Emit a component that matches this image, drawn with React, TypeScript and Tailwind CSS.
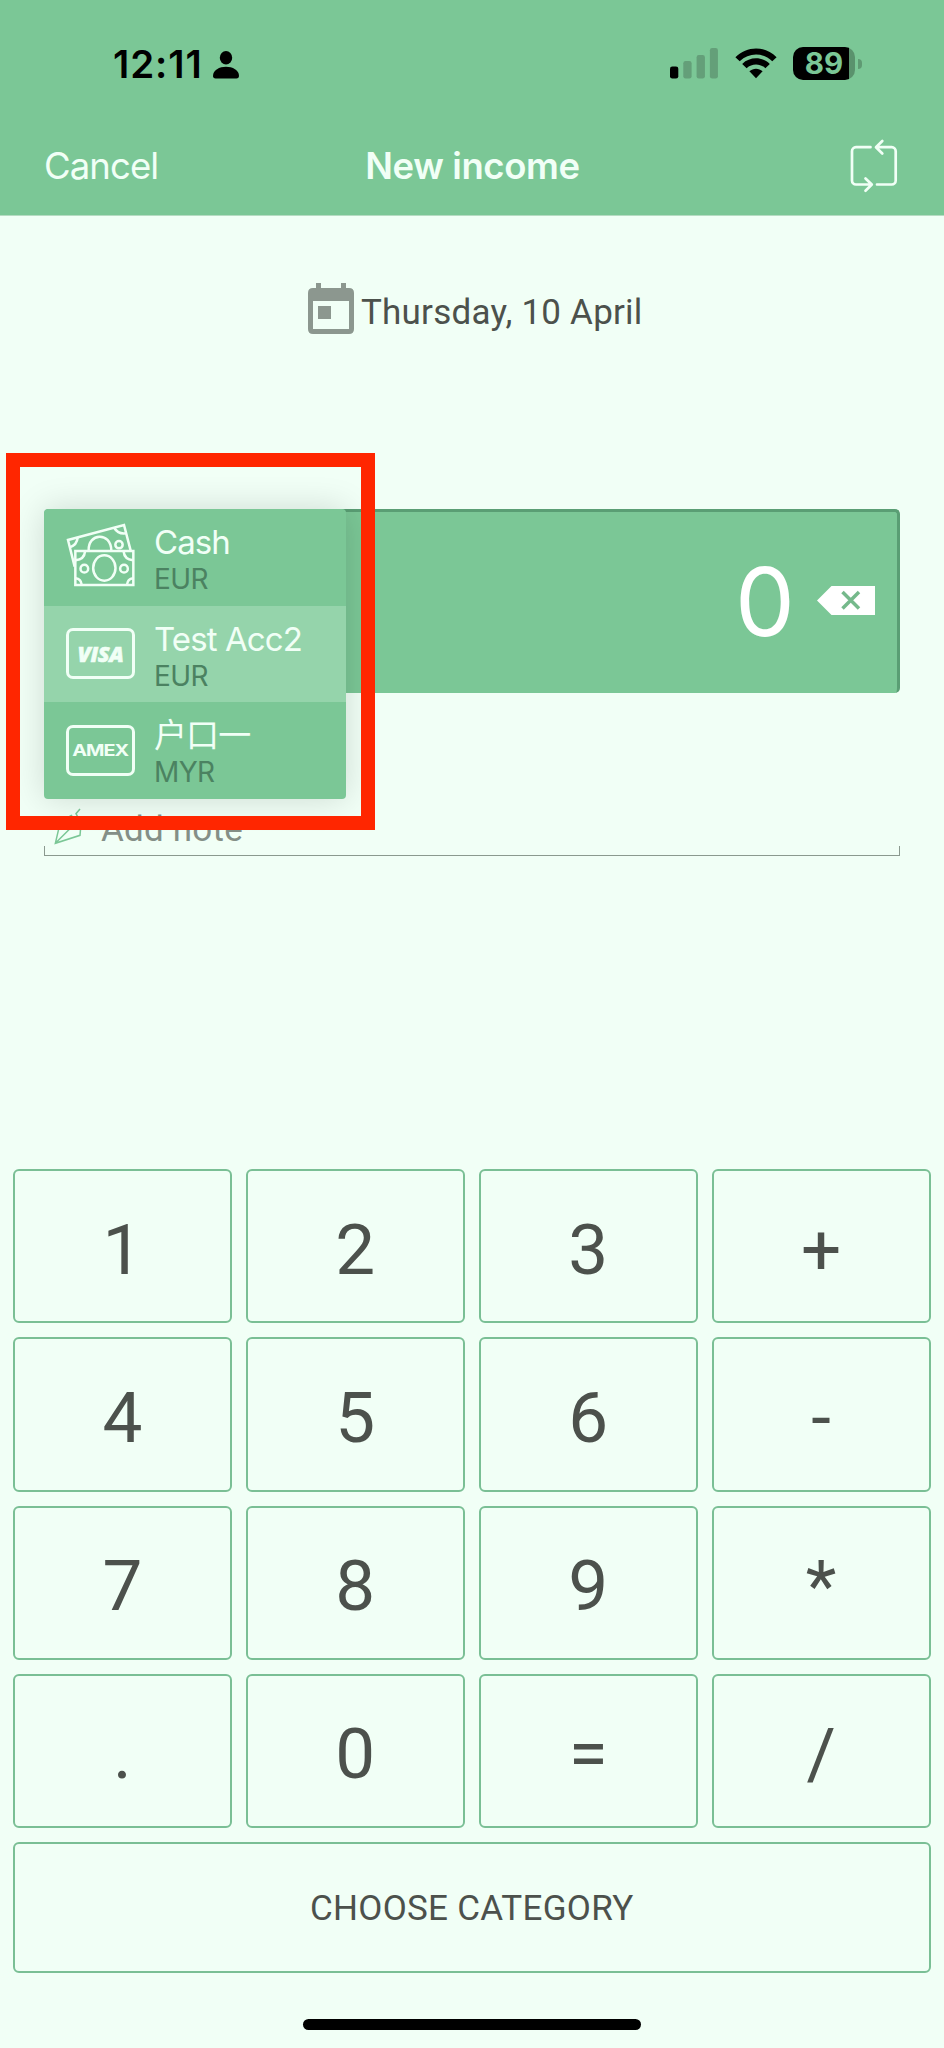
import React from "react";

const keys = ["1", "2", "3", "+", "4", "5", "6", "-", "7", "8", "9", "*", ".", "0", "=", "/"];

function StatusBar() {
  return (
    <div className="flex h-[126px] items-start pt-[41px] pl-[113px] text-black">
      <span className="w-[100px] text-[38.5px] leading-[47px] font-semibold tracking-[0.9px] whitespace-nowrap">12:11</span>
      <svg width="26" height="28" viewBox="0 0 26 28" className="mt-[10px]">
        <ellipse cx="13" cy="6.8" rx="6.2" ry="6.8" />
        <path d="M2.6 27.5Q0 27.5 0 24.8C0 19 6.5 15.7 13 15.7S26 19 26 24.8Q26 27.5 23.4 27.5Z" />
      </svg>
      <svg width="48" height="31" viewBox="0 0 48 31" className="mt-[7px] ml-[431px]">
        <rect x="0" y="18.5" width="8.3" height="12" rx="2.3" />
        <g fill="#649f79">
          <rect x="13.3" y="13" width="8.3" height="17.5" rx="2.3" />
          <rect x="26.6" y="7" width="8.3" height="23.5" rx="2.3" />
          <rect x="39.9" y="0" width="8" height="30.5" rx="2.3" />
        </g>
      </svg>
      <svg width="42" height="31" viewBox="0 0 42 31" className="mt-[7px] ml-[17px]">
        <path d="M.4 9.3C12-2.6 30-2.6 41.6 9.3L37.3 13.3C28 4.2 14 4.2 4.7 13.3Z" />
        <path d="M7.2 15.9C15 8.5 27 8.5 34.8 15.9L30.4 20.2C25 15.2 17 15.2 11.6 20.2Z" />
        <path d="M14.4 23.2C18.3 19.8 23.7 19.8 27.6 23.2L21 30.3Z" />
      </svg>
      <div className="mt-[6px] ml-[16px] flex h-[33px] w-[62px] justify-center rounded-[10px] bg-[linear-gradient(90deg,#000_56px,#5a926d_56px)]">
        <span className="text-[29.5px] leading-[33px] font-bold text-[#7bc796]">89</span>
      </div>
      <div className="mt-[18px] ml-[3px] h-[10px] w-[3.5px] rounded-r-full bg-[#5f9a73]" />
    </div>
  );
}

function RepeatIcon() {
  return (
    <svg width="50" height="54" viewBox="849 138.5 50 54" fill="none" stroke="#f1fff6" strokeWidth="2.7" strokeLinecap="round" strokeLinejoin="round">
      <path d="M870.5 146.7H856a4 4 0 0 0-4 4V180a4 4 0 0 0 4 4h15.5M865.5 178l6.3 6-6.3 6.3" />
      <path d="M877 184h14.7a4 4 0 0 0 4-4v-29.3a4 4 0 0 0-4-4h-15M882.3 140.5l-6.3 6.2 6.3 6.3" />
    </svg>
  );
}

function CalendarIcon() {
  return (
    <svg width="46" height="52" viewBox="0 0 46 52" fill="#8c978f">
      <path fillRule="evenodd" d="M8 0h5v5h20V0h5v5h3q5 0 5 5v36q0 5-5 5H5q-5 0-5-5V10Q0 5 5 5h3ZM5 18v28h36V18Z" />
      <rect x="10" y="23" width="13" height="13" />
    </svg>
  );
}

function CashIcon() {
  return (
    <svg width="70" height="64" viewBox="197 247 210 192" fill="none" stroke="#f1fff6" strokeWidth="7.5" className="-mt-[5px]">
      <path d="M223 378L203 298L371 253L391 330" />
      <path d="M208 320Q230 313 232 291M342 262Q353 281 377 278" />
      <path d="M265 330C262 276 332 272 333 330" />
      <circle cx="356" cy="312" r="11" />
      <rect x="225" y="331" width="174" height="102" />
      <ellipse cx="312" cy="382" rx="33.5" ry="38" />
      <circle cx="252" cy="384" r="11.5" />
      <circle cx="371" cy="384" r="11.5" />
      <path d="M226 359Q252 356 254 333M398 359Q372 356 370 333M226 413Q242 415 244 432M398 413Q382 415 380 432" />
    </svg>
  );
}

function Card({ children }: { children: React.ReactNode }) {
  return (
    <div className="-mt-px flex h-[51px] w-[69px] items-center justify-center rounded-[7px] border-3 border-[#f1fff6] text-[#f1fff6]">
      {children}
    </div>
  );
}

const accounts = [
  { name: "Cash", currency: "EUR", icon: <CashIcon />, row: "bg-[#7bc796]" },
  {
    name: "Test Acc2",
    currency: "EUR",
    icon: (
      <Card>
        <span className="font-['Open_Sans'] text-[21.5px] leading-none font-extrabold tracking-[-0.3px] italic [-webkit-text-stroke:0.6px_#f1fff6]">VISA</span>
      </Card>
    ),
    row: "bg-[#95d4ab]",
  },
  {
    name: "户口一",
    currency: "MYR",
    icon: (
      <Card>
        <span className="scale-x-120 text-[16.5px] leading-none font-bold tracking-[-0.9px]">AMEX</span>
      </Card>
    ),
    row: "bg-[#7bc796]",
  },
];

function AccountMenu() {
  return (
    <div className="absolute top-0 left-0 flex h-[290px] w-[302px] flex-col overflow-hidden rounded-[4px]">
      {accounts.map((a) => (
        <div key={a.name} className={"flex flex-1 " + a.row}>
          <div className="flex w-[110px] items-center pl-[22px]">{a.icon}</div>
          <div className="flex flex-col pt-[13px] whitespace-nowrap">
            <span className="h-10 font-[Inter,'Noto_Sans_CJK_SC',sans-serif] text-[33px] leading-10 font-normal tracking-[-0.9px] text-[#f1fff6]">{a.name}</span>
            <span className="text-[28px] leading-[34px] font-normal tracking-[-0.6px] text-[#4b8261]">{a.currency}</span>
          </div>
        </div>
      ))}
    </div>
  );
}

export default function App() {
  return (
    <div className="relative flex h-[2048px] w-[944px] flex-col overflow-hidden bg-[#f1fff6] font-[Inter,sans-serif]">
      <header className="h-[216px] border-b border-[#b5dcc2] bg-[#7bc796]">
        <StatusBar />
        <div className="grid h-[80px] grid-cols-3 items-center pr-[45px] pl-[44px] text-[#f1fff6]">
          <span className="text-[36.5px] leading-[44px] tracking-[-0.9px]">Cancel</span>
          <span className="pl-[2px] text-center text-[36.5px] leading-[44px] font-semibold tracking-[-0.4px] whitespace-nowrap">New income</span>
          <span className="flex justify-end">
            <RepeatIcon />
          </span>
        </div>
      </header>

      <div className="flex h-[293px] items-start pt-[67px] pl-[308px]">
        <CalendarIcon />
        <span className="mt-[9px] ml-[7px] font-[Roboto] text-[35px] leading-[42px] tracking-[0.22px] text-[#4c514c]">Thursday, 10 April</span>
      </div>

      <main className="relative mx-[44px] flex h-[348px] flex-col">
        <section className="flex h-[184px] items-center justify-end rounded-[5px] border-t-[3.5px] border-r-[3.5px] border-[#5a9e74] bg-[#7bc796] pr-[22px] pb-[3px]">
          <span className="mr-[22px] text-[95px] leading-none text-white">0</span>
          <svg width="58" height="29" viewBox="0 0 58 29" className="-mt-[2px]">
            <path d="M0 14.5L14.5 0H58V29H14.5Z" fill="#fff" />
            <path d="M25.5 6L42 22.5M42 6L25.5 22.5" stroke="#75b98b" strokeWidth="3.5" />
          </svg>
        </section>
        <div className="mt-[113px] flex h-[42px] items-center">
          <svg width="30" height="38" viewBox="162 476 90 114" className="ml-[10px]" fill="none" stroke="#7bc796" strokeWidth="4.5">
            <path d="M166 582L177 535Q190 510 214 498L242 535L240 558ZM166 582L212 536M240 479L228 493L238 512" />
          </svg>
          <span className="mt-[5px] ml-[17px] font-[Roboto] text-[35px] leading-[42px] tracking-[0.2px] text-[#848f87]">Add note</span>
        </div>
        <div className="mt-[-2px] h-[10px] border-x border-b border-[#8b998f]" />
        <div className="absolute top-0 left-0 h-[290px] w-[302px] rounded-[4px] shadow-[0_0_34px_rgba(0,0,0,0.15)]" />
        <AccountMenu />
        <div className="absolute top-[-56px] left-[-38px] h-[377px] w-[368.5px] border-[14.5px] border-[#ff2600]" />
      </main>

      <div className="mt-[312px] mr-[13.5px] ml-[13px] flex flex-col gap-[14px]">
        <div className="grid h-[659px] grid-cols-4 grid-rows-4 gap-[14px]">
          {keys.map((k) => (
            <button key={k} className="flex items-center justify-center rounded-[6px] border-2 border-[#7abf95] pt-[6px] font-[Roboto] text-[71px] leading-none text-[#4c514c]">
              {k}
            </button>
          ))}
        </div>
        <button className="h-[131px] rounded-[6px] border-2 border-[#7abf95] pt-[4px] font-[Roboto] text-[35px] tracking-[0.3px] text-[#4c514c]">CHOOSE CATEGORY</button>
      </div>
      <div className="mx-auto mt-[46px] h-[11px] w-[338px] shrink-0 rounded-full bg-black" />
    </div>
  );
}
